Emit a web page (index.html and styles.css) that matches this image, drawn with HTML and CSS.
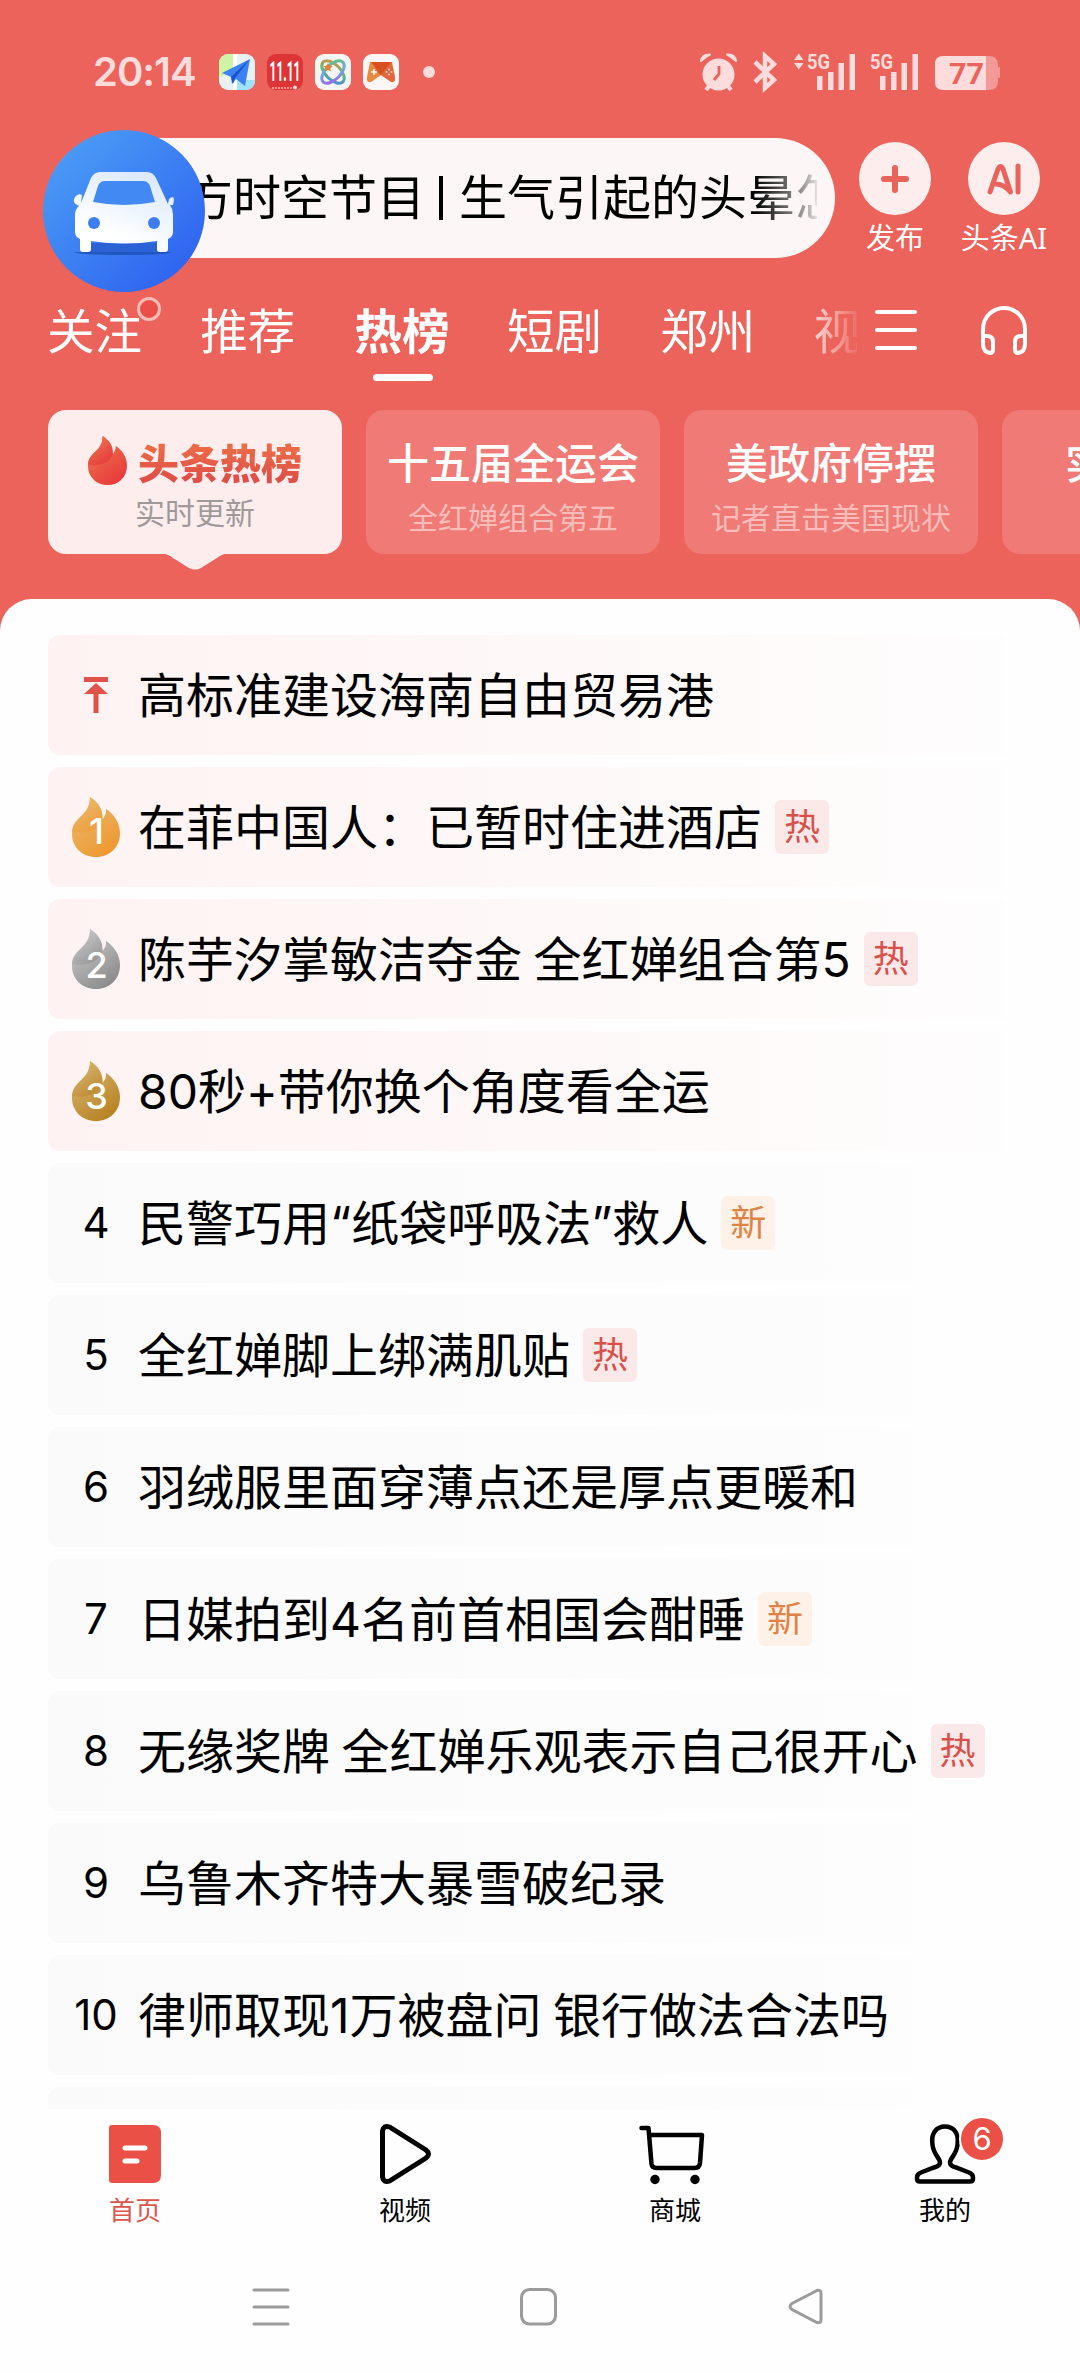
FILE: index.html
```html
<!DOCTYPE html>
<html lang="zh-CN">
<head>
<meta charset="utf-8">
<title>头条热榜</title>
<link rel="stylesheet" href="styles.css">
</head>
<body>
<svg class="defs" aria-hidden="true">
  <defs>
    <linearGradient id="car-bg" x1="0.1" y1="0.1" x2="0.85" y2="0.9"><stop offset="0" stop-color="#4a9cf6"/><stop offset="1" stop-color="#2f64f0"/></linearGradient>
    <linearGradient id="car-body" x1="0.3" y1="1" x2="0.8" y2="0"><stop offset="0.2" stop-color="#fff"/><stop offset="1" stop-color="#d9e8fc"/></linearGradient>
    <linearGradient id="flame-red" x1="0.2" y1="0" x2="0.8" y2="1"><stop offset="0" stop-color="#ea7d50"/><stop offset="1" stop-color="#e9353a"/></linearGradient>
    <linearGradient id="flame-gold" x1="0.2" y1="0" x2="0.8" y2="1"><stop offset="0" stop-color="#eabb70"/><stop offset="1" stop-color="#ee962d"/></linearGradient>
    <linearGradient id="flame-silver" x1="0.2" y1="0" x2="0.8" y2="1"><stop offset="0" stop-color="#cfcfcf"/><stop offset="1" stop-color="#878787"/></linearGradient>
    <linearGradient id="flame-bronze" x1="0.2" y1="0" x2="0.8" y2="1"><stop offset="0" stop-color="#dab978"/><stop offset="1" stop-color="#b57e1d"/></linearGradient>
    <linearGradient id="orbit" x1="0" y1="0" x2="1" y2="1"><stop offset="0" stop-color="#f08a3a"/><stop offset="0.5" stop-color="#58bf78"/><stop offset="1" stop-color="#4a7fe8"/></linearGradient>
    <linearGradient id="orbit-alt" x1="1" y1="0" x2="0" y2="1"><stop offset="0" stop-color="#5cc76a"/><stop offset="0.5" stop-color="#6fa8e8"/><stop offset="1" stop-color="#a45be0"/></linearGradient>
    <path id="flame" d="M18 0C26 5 31 12 30.500 22C33 19 34.500 16 34 12C42 17 48 26 48 36C48 50 38 60 24 60C10 60 0 50 0 37C0 19 18 20 18 0Z"/>
    <path id="flame-shade" d="M18 0C26 5 31 12 30.500 22C28 32 15 38 0 35C1 19 18 20 18 0Z"/>
  </defs>
</svg>
<div class="phone">
  <header class="top">
    <div class="status">
      <span class="clock">20:14</span>
      <div class="apps">
        <svg width="36" height="36" viewBox="0 0 36 36"><rect width="36" height="36" rx="9" fill="#e9f1f3"/><path d="M0 9a9 9 0 0 1 9-9h5v15L0 24z" fill="#cdf3a3"/><path d="M18 26h18v1a9 9 0 0 1-9 9h-9z" fill="#9fe2fb"/><path d="M14 0h4v36h-4z" fill="#fff"/><path d="M31 5L3 19l9 4 1 7 4-5 9 7z" fill="#3b82f3"/><path d="M31 5L12 23l2 7 2-6z" fill="#1c4fd0"/></svg>
        <svg width="36" height="36" viewBox="0 0 36 36"><rect width="36" height="36" rx="9" fill="#dd3436"/><text class="promo" x="18" y="27" text-anchor="middle" textLength="31" lengthAdjust="spacingAndGlyphs">11.11</text><path d="M5 34h20" stroke="#f3b0a8" stroke-width="1.500" stroke-dasharray="2 1"/><circle cx="28" cy="33.500" r="2" fill="#fbdcd8"/></svg>
        <svg width="36" height="36" viewBox="0 0 36 36"><rect width="36" height="36" rx="9" fill="#f6f5f5"/><g fill="none" stroke-width="3"><ellipse cx="18" cy="18" rx="14" ry="7.500" transform="rotate(45 18 18)" stroke="url(#orbit)"/><ellipse cx="18" cy="18" rx="14" ry="7.500" transform="rotate(-45 18 18)" stroke="url(#orbit-alt)"/></g><path d="M13 9l1.500 2.800 3 .4-2.200 2.100.6 3-2.900-1.400-2.800 1.400.6-3-2.200-2.100 3-.4z" fill="#ee7a33"/></svg>
        <svg width="36" height="36" viewBox="0 0 36 36"><rect width="36" height="36" rx="9" fill="#faf7f5"/><path d="M7 8h9l8 9-16 11q-5 1-4-5z" fill="#e9893f"/><path d="M29 8h-9l-8 9 16 11q5 1 4-5z" fill="#e3673c"/><path d="M8 8h20l-10 13z" fill="#d9501f"/><path d="M8 18h6M11 15v6" stroke="#fff" stroke-width="1.600"/><g fill="#fbd5c5"><circle cx="26" cy="15.500" r="1"/><circle cx="26" cy="20.500" r="1"/><circle cx="23.500" cy="18" r="1"/><circle cx="28.500" cy="18" r="1"/></g></svg>
      </div>
      <i class="more-dot"></i>
      <svg class="signals" width="301" height="38" viewBox="0 0 301 38" fill="#fddcdb">
        <circle cx="18.500" cy="21.500" r="16"/><path d="M1 8Q2 1 10 1.500Q5 4 1 8zM36 8Q35 1 27 1.500Q32 4 36 8z" stroke="#fddcdb" stroke-width="2" stroke-linejoin="round"/><path d="M9 33l-3 4M28 33l3 4" stroke="#fddcdb" stroke-width="4"/><path d="M19 13v8l-5 6" fill="none" stroke="#ec635c" stroke-width="2.800"/>
        <path d="M55 9l19 18-9 8V3l9 8-19 18" fill="none" stroke="#fddcdb" stroke-width="4.500"/>
        <path d="M94 7l4.700-6.500L103.500 7zM94 10l4.700 6.500L103.500 10z"/>
        <text class="net" x="107" y="16" textLength="23" lengthAdjust="spacingAndGlyphs">5G</text>
        <path d="M117 23h5.500v14H117zM128 19h5.500v18H128zM138.500 10h5.500v27h-5.500zM149.500 1h5.500v36h-5.500z"/>
        <text class="net" x="170" y="16" textLength="23" lengthAdjust="spacingAndGlyphs">5G</text>
        <path d="M180 23h5.500v14H180zM191 19h5.500v18H191zM201.500 10h5.500v27h-5.500zM212.500 1h5.500v36h-5.500z"/>
        <path d="M286 3h3q9 0 9 9v2h2v11h-2v3q0 9-9 9h-3z" fill="#f39a96"/><path d="M286 3h-43q-8 0-8 8v18q0 8 8 8h43z"/>
        <text class="level" x="249" y="31" textLength="35" lengthAdjust="spacingAndGlyphs">77</text>
      </svg>
    </div>

    <div class="searchline">
      <div class="search">
        <div class="query"><span>方时空节目</span><i class="bar"></i><span>生气引起的头晕怎</span></div>
        <svg class="car" width="162" height="162" viewBox="0 0 162 162"><circle cx="81" cy="81" r="81" fill="url(#car-bg)"/><path d="M31 122h98q-4 3-49 3t-49-3z" fill="#174aa8" opacity=".7"/><path d="M47 113h68v9H47z" fill="#2b62d6"/><path d="M58 42h46q6 0 9 6l12 26 1-5q7-6 4 6h-3q3 4 3 9v18q0 5-5 7v10q0 3-3 3h-5q-3 0-3-3v-8q-33 5-66 0v8q0 3-3 3h-5q-3 0-3-3v-10q-5-2-5-7V85q0-6 4-9-8-3-4-9 3-4 7-2l-1 8 10-25q3-6 9-6z" fill="url(#car-body)"/><path d="M62 51h38q5 0 7 5l5 16q-31 6-62 0l5-16q2-5 7-5z" fill="#4389f4"/><circle cx="51" cy="93" r="6" fill="#3e7df1"/><circle cx="111" cy="93" r="6" fill="#3e7df1"/></svg>
      </div>
      <a class="action"><span class="disc"><svg width="28" height="28" viewBox="0 0 28 28"><path d="M14 3v22M3 14h22" stroke="#e9635d" stroke-width="6" stroke-linecap="round"/></svg></span><span>发布</span></a>
      <a class="action"><span class="disc"><svg width="34" height="34" viewBox="0 0 34 34" fill="none" stroke="#e9635d" stroke-width="5" stroke-linecap="round" stroke-linejoin="round"><path d="M3 30L11 7q2.500-5 5 0l7.500 23q-7-8-14.500-8M31 4v26"/></svg></span><span>头条AI</span></a>
    </div>

    <nav class="tabs">
      <div class="tablist">
        <a class="tab">关注<i class="unread"></i></a><a class="tab">推荐</a><a class="tab active">热榜</a><a class="tab">短剧</a><a class="tab">郑州</a><a class="tab">视频</a>
      </div>
      <svg width="42" height="40" viewBox="0 0 42 40"><path d="M2 2h38M2 20h38M2 38h38" stroke="#fff" stroke-width="4" stroke-linecap="round"/></svg>
      <svg width="46" height="49" viewBox="0 0 46 49" fill="none" stroke="#fff" stroke-width="4"><path d="M2 38V23a21 21 0 0 1 42 0v15M2 30h4q6 0 6 6v7q0 4-3 4-7-1-7-9zM44 30h-4q-6 0-6 6v7q0 4 3 4 7-1 7-9z" stroke-linejoin="round"/></svg>
    </nav>

    <div class="cards">
      <section class="card current">
        <h2><svg width="39" height="49" viewBox="0 0 48 60" preserveAspectRatio="none"><use href="#flame" fill="url(#flame-red)"/><use href="#flame-shade" fill="url(#flame-red)"/></svg><span>头条热榜</span></h2>
        <p>实时更新</p>
        <svg class="pointer" width="74" height="17" viewBox="0 0 74 17"><path d="M0 0Q9 0 15 5L31 15Q37 18 43 15L59 5Q65 0 74 0z" fill="#fdeeed"/></svg>
      </section>
      <section class="card"><h2>十五届全运会</h2><p>全红婵组合第五</p></section>
      <section class="card"><h2>美政府停摆</h2><p>记者直击美国现状</p></section>
      <section class="card"><h2>实时战况</h2></section>
    </div>
  </header>

  <main class="sheet">
    <ol class="list">
      <li class="row hot"><span class="rank"><svg width="24" height="36" viewBox="0 0 24 36"><path d="M0 0h24v5H0zM12 6l12 11h-9.500v19h-5V17H0z" fill="#e0534b"/></svg></span><span class="title">高标准建设海南自由贸易港</span></li>
      <li class="row hot"><span class="rank"><svg width="48" height="60" viewBox="0 0 48 60"><use href="#flame" fill="url(#flame-gold)"/><use href="#flame-shade" fill="url(#flame-gold)" opacity=".6"/><text class="medal" x="24.500" y="47">1</text></svg></span><span class="title">在菲中国人：已暂时住进酒店</span><b class="tag">热</b></li>
      <li class="row hot"><span class="rank"><svg width="48" height="60" viewBox="0 0 48 60"><use href="#flame" fill="url(#flame-silver)"/><use href="#flame-shade" fill="url(#flame-silver)" opacity=".6"/><text class="medal" x="24.500" y="49">2</text></svg></span><span class="title">陈芋汐掌敏洁夺金 全红婵组合第5</span><b class="tag">热</b></li>
      <li class="row hot"><span class="rank"><svg width="48" height="60" viewBox="0 0 48 60"><use href="#flame" fill="url(#flame-bronze)"/><use href="#flame-shade" fill="url(#flame-bronze)" opacity=".6"/><text class="medal" x="24.500" y="48">3</text></svg></span><span class="title">80秒+带你换个角度看全运</span></li>
      <li class="row"><span class="rank">4</span><span class="title">民警巧用“纸袋呼吸法”救人</span><b class="tag new">新</b></li>
      <li class="row"><span class="rank">5</span><span class="title">全红婵脚上绑满肌贴</span><b class="tag">热</b></li>
      <li class="row"><span class="rank">6</span><span class="title">羽绒服里面穿薄点还是厚点更暖和</span></li>
      <li class="row"><span class="rank">7</span><span class="title">日媒拍到4名前首相国会酣睡</span><b class="tag new">新</b></li>
      <li class="row"><span class="rank">8</span><span class="title">无缘奖牌 全红婵乐观表示自己很开心</span><b class="tag">热</b></li>
      <li class="row"><span class="rank">9</span><span class="title">乌鲁木齐特大暴雪破纪录</span></li>
      <li class="row"><span class="rank">10</span><span class="title">律师取现1万被盘问 银行做法合法吗</span></li>
      <li class="row"></li>
    </ol>
  </main>

  <nav class="dock">
    <a class="dock-item selected"><svg width="54" height="60" viewBox="0 0 54 60"><path d="M4 1h41q8 0 8 8v42q0 8-8 8H4q-3 0-3-3V4q0-3 3-3z" fill="#ea5045"/><path d="M17 24h20M17 37h12" stroke="#fff" stroke-width="5" stroke-linecap="round"/></svg><span>首页</span></a>
    <a class="dock-item"><svg width="54" height="60" viewBox="0 0 54 60"><path d="M4.500 7v46q1 6 7 4L48 34q5-4 0-8L11.500 3q-6-2-7 4z" fill="none" stroke="#000" stroke-width="5"/></svg><span>视频</span></a>
    <a class="dock-item"><svg class="cart" width="66" height="60" viewBox="0 0 66 60"><path d="M2.500 4h7l3 36q.5 4 5 4h38q5 0 5.500-5l2-28H10" fill="none" stroke="#000" stroke-width="4.500" stroke-linecap="round" stroke-linejoin="round"/><circle cx="16" cy="55.500" r="4.700"/><circle cx="56" cy="55.500" r="4.700"/></svg><span>商城</span></a>
    <a class="dock-item"><svg width="60" height="60" viewBox="0 0 60 60"><path d="M30 2.500c-9 0-13.500 7-12.700 16 .2 12 7.700 15 7.700 20 0 3-4 4.500-6 5L6 48.500q-4 1.500-4 5v1q0 3 3 3h50q3 0 3-3v-1q0-3.500-4-5L41 43.500c-2-.5-6-2-6-5 0-5 7.500-8 7.700-20C43.500 9.500 39 2.500 30 2.500z" fill="none" stroke="#000" stroke-width="4.500"/></svg><em class="count">6</em><span>我的</span></a>
  </nav>
  <footer class="keys">
    <svg width="36" height="38" viewBox="0 0 36 38"><path d="M1 2h34M1 19h34M1 36h34" stroke="#9b9b9b" stroke-width="3" stroke-linecap="round"/></svg>
    <svg width="37" height="38" viewBox="0 0 37 38"><rect x="1.500" y="1.500" width="34" height="34.500" rx="8" fill="none" stroke="#9b9b9b" stroke-width="3"/></svg>
    <svg width="36" height="38" viewBox="0 0 36 38"><path d="M29 2.500L4 15.500q-4 3 0 6L29 34.500q4 1 4-3v-26q0-4-4-3z" fill="none" stroke="#9b9b9b" stroke-width="3"/></svg>
  </footer>
</div>
</body>
</html>
```

FILE: styles.css
```css
* { box-sizing: border-box; }

body {
  margin: 0;
  background: #fefefe;
  color: #000;
  font-family: "Noto Sans", "Noto Sans CJK SC", sans-serif;
}

h2, p, ol { margin: 0; padding: 0; font-weight: 400; }
svg { display: block; flex: none; overflow: visible; }
.defs { position: absolute; width: 0; height: 0; }

.phone {
  width: 1080px;
  height: 2373px;
  display: flex;
  flex-direction: column;
  overflow: hidden;
  background: #fefefe;
}

/* red header */
.top { height: 640px; flex: none; background: #ec635c; color: #fff; }

.status { height: 138px; padding: 53px 79px 0 93px; display: flex; align-items: flex-start; }
.clock { width: 126px; font: 600 40px/38px Inter, sans-serif; letter-spacing: -1px; color: #fddcdb; }
.apps { display: flex; gap: 12px; padding-top: 1px; }
.promo { font: 700 27px Roboto, sans-serif; fill: #fff; }
.more-dot { width: 12px; height: 12px; margin: 13px 0 0 24px; border-radius: 50%; background: #fddcdb; }
.signals { margin-left: auto; }
.net { font: 700 21px Roboto, sans-serif; }
.level { font: 700 30px Roboto, sans-serif; fill: #ec635c; }

.searchline { height: 120px; padding-left: 48px; display: flex; align-items: flex-start; }
.search { position: relative; width: 787px; height: 120px; padding: 0 18px 0 137px; border-radius: 60px; background: #fcf6f6; color: #000; }
.query {
  height: 118px;
  display: flex;
  align-items: center;
  overflow: hidden;
  white-space: nowrap;
  font-size: 48px;
  line-height: 118px;
  -webkit-mask-image: linear-gradient(to right, #000 570px, rgba(0, 0, 0, .35) 620px, transparent 636px);
  mask-image: linear-gradient(to right, #000 570px, rgba(0, 0, 0, .35) 620px, transparent 636px);
}
.query span { flex: none; }
.bar { flex: none; width: 4px; height: 44px; margin: 2px 16px 0 14px; background: #000; }
.car { position: absolute; left: -5px; top: -8px; }
.action { width: 110px; padding-top: 4px; margin-left: 5px; display: flex; flex-direction: column; align-items: center; font-size: 29px; line-height: 40px; white-space: nowrap; }
.action + .action { margin-left: -1px; }
.action > span:last-child { margin-top: 3px; }
.disc { width: 72px; height: 73px; border-radius: 50%; background: #fdeeed; display: flex; align-items: center; justify-content: center; }

.tabs { height: 152px; padding-left: 47px; display: flex; align-items: flex-start; }
.tabs > svg { margin-top: 52px; }
.tabs > svg + svg { margin: 48px 0 0 64px; }
.tablist {
  width: 810px;
  margin-right: 18px;
  display: flex;
  overflow: hidden;
  -webkit-mask-image: linear-gradient(to right, #000 750px, transparent 815px);
  mask-image: linear-gradient(to right, #000 750px, transparent 815px);
}
.tab { position: relative; flex: none; width: 153.3px; height: 126px; padding-top: 38px; font-size: 47.5px; line-height: 70px; white-space: nowrap; }
.active { padding-left: 1px; font-weight: 700; }
.active::after { content: ""; position: absolute; left: 19px; top: 116px; width: 60px; height: 7px; border-radius: 4px; background: #fff; }
.unread { position: absolute; left: 90px; top: 39px; width: 24px; height: 24px; border: 3px solid #f9bcb8; border-radius: 50%; background: #ea5047; }

.cards { padding-left: 48px; display: flex; gap: 24px; overflow: hidden; height: 189px; }
.card { position: relative; flex: none; width: 294px; height: 144px; padding-top: 26px; border-radius: 18px; background: #f07a75; text-align: center; white-space: nowrap; }
.card h2 { font-size: 42px; font-weight: 500; line-height: 54px; }
.card p { margin-top: 8px; font-size: 30px; line-height: 40px; color: #f8bdba; }
.current { background: #fdeeed; }
.current h2 { display: flex; justify-content: center; gap: 11px; font-size: 41px; font-weight: 900; }
.current h2 span { background: linear-gradient(#ec6b47 20%, #df4f47 80%); -webkit-background-clip: text; background-clip: text; color: transparent; }
.current p { margin-top: 3px; color: #9f9a99; }
.pointer { position: absolute; left: 110px; top: 143px; }

/* ranking list */
.sheet { flex: none; height: 1510px; margin-top: -41px; padding: 36px 0 0 48px; border-radius: 32px 32px 0 0; background: #fefefe; overflow: hidden; }
.list { display: flex; flex-direction: column; gap: 12px; list-style: none; }
.row {
  flex: none;
  width: 1032px;
  height: 120px;
  display: flex;
  align-items: center;
  border-radius: 12px;
  background: linear-gradient(to right, #fafafa, #fdfdfd 865px, #fefefe 865px);
}
.hot { background: linear-gradient(to right, #fef3f2, #fefdfd 957px, #fefefe 957px); }
.rank { width: 90px; padding-left: 6px; display: flex; justify-content: center; font: 400 42px/60px Inter, sans-serif; }
.medal { font: 500 36px Inter, sans-serif; fill: #fff; text-anchor: middle; }
.title { flex: none; padding-top: 2px; font-family: Inter, "Noto Sans CJK SC", sans-serif; font-size: 48px; line-height: 118px; word-spacing: -2px; white-space: nowrap; }
.tag { flex: none; width: 54px; height: 54px; margin-left: 13px; border-radius: 6px; background: #fbe9e9; color: #d8504a; font-size: 36px; font-weight: 400; line-height: 53px; text-align: center; }
.new { background: #fdf1e8; color: #df8344; }

/* bottom navigation */
.dock { flex: none; height: 151px; display: grid; grid-template-columns: repeat(4, 1fr); }
.dock-item { position: relative; padding-top: 15px; display: flex; flex-direction: column; align-items: center; font-size: 26px; line-height: 36px; }
.dock-item span { margin-top: 8px; }
.cart { margin-right: 6px; }
.selected { color: #dc554d; }
.count { position: absolute; left: 149px; top: 7px; width: 46px; height: 46px; border: 2px solid #fefefe; border-radius: 50%; background: #ea5045; color: #fff; font: 400 31px/42px Inter, sans-serif; text-align: center; }

.keys { height: 113px; padding: 28px 0 0 253px; display: flex; gap: 231px; }
```
